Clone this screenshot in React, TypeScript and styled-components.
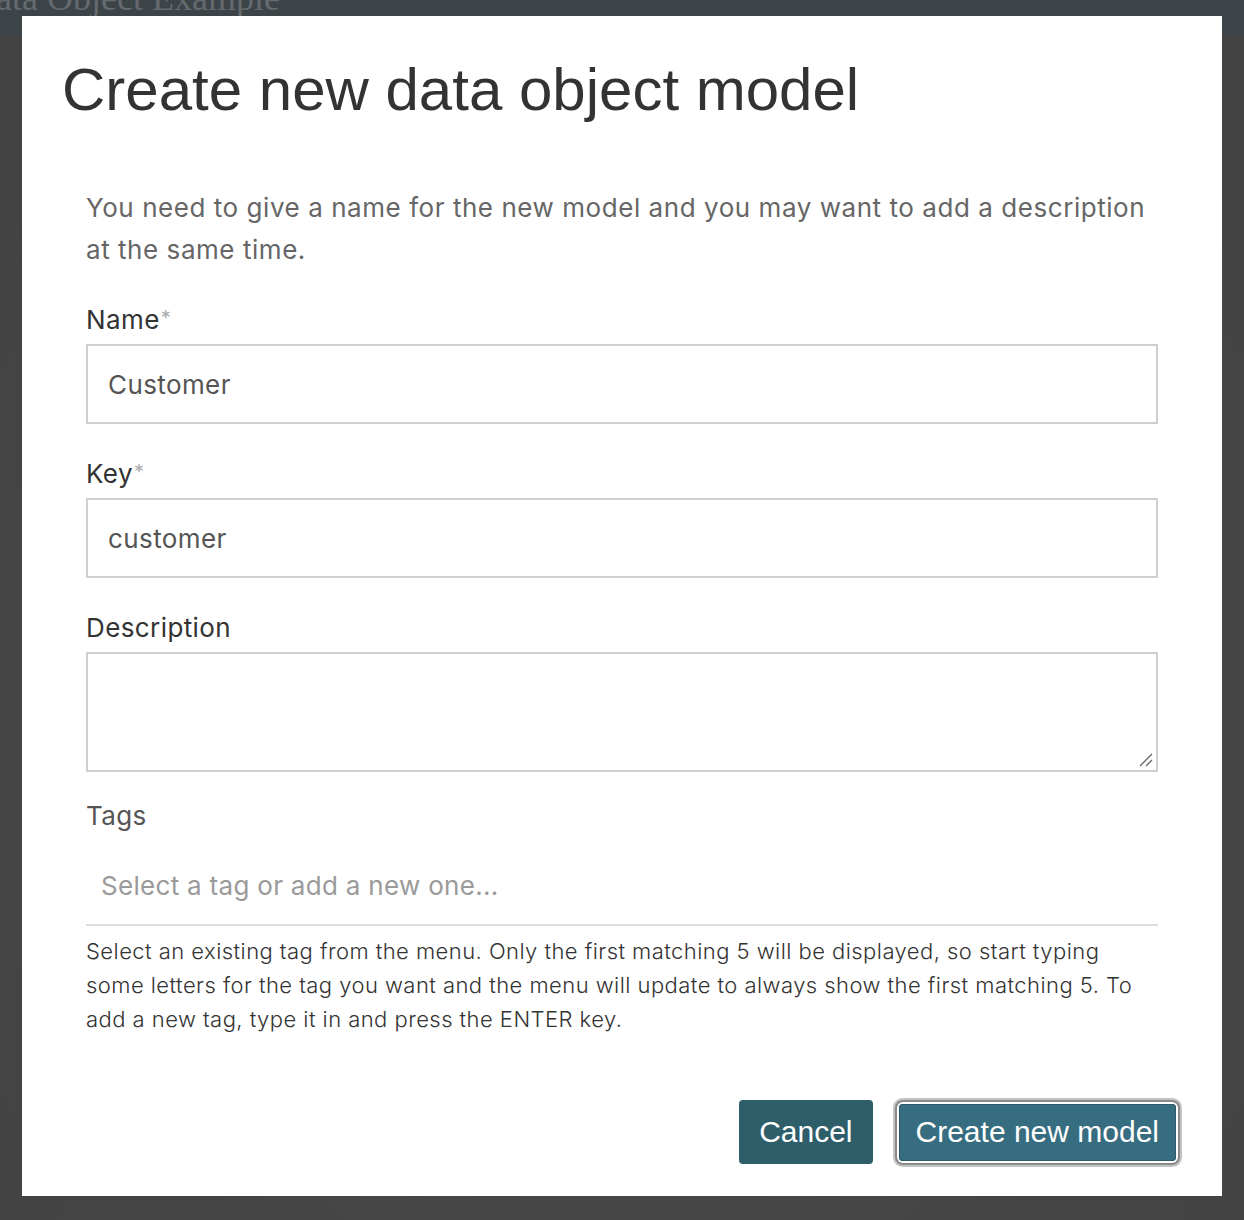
import React from "react";
import styled, { createGlobalStyle } from "styled-components";

const Global = createGlobalStyle`
  html, body { margin: 0; padding: 0; }
  body {
    width: 1244px;
    height: 1220px;
    overflow: hidden;
    background: #464646;
    font-family: "Liberation Sans", Arial, sans-serif;
  }
  #root { height: 1220px; }
`;

const Page = styled.div`
  position: relative;
  width: 1244px;
  height: 1220px;
  background: radial-gradient(ellipse at 50% 60%, #4a4a4a 0%, #424242 100%);
  overflow: hidden;
`;

const TopBar = styled.header`
  height: 36px;
  background: #3d4448;
  overflow: hidden;
`;

const TopTitle = styled.div`
  margin-top: -22px;
  margin-left: -30px;
  font-family: "Liberation Serif", serif;
  font-size: 36px;
  line-height: 40px;
  color: #646a6e;
  white-space: nowrap;
`;

const Modal = styled.div`
  position: absolute;
  left: 22px;
  top: 16px;
  width: 1200px;
  height: 1180px;
  background: #fff;
  box-sizing: border-box;
  display: flex;
  flex-direction: column;
`;

const Title = styled.h1`
  margin: 0;
  padding: 42px 40px 0 40px;
  font-size: 60px;
  line-height: 64px;
  font-weight: 400;
  color: #333;
`;

const Body = styled.div`
  padding: 65px 64px 0 64px;
  display: flex;
  flex-direction: column;
  font-family: Inter, "Liberation Sans", sans-serif;
`;

const Intro = styled.p`
  margin: 0 0 34px 0;
  font-size: 26px;
  line-height: 42px;
  color: #666;
  letter-spacing: 0.55px;
`;

const Field = styled.div<{ $gap?: number }>`
  display: flex;
  flex-direction: column;
  margin-bottom: ${(p) => p.$gap ?? 35}px;
`;

const Label = styled.label<{ $muted?: boolean }>`
  font-size: 26px;
  line-height: 30px;
  color: ${(p) => (p.$muted ? "#555" : "#333")};
  margin-bottom: 9px;
  letter-spacing: 0.4px;
`;

const Req = styled.span`
  color: #aaa;
  font-size: 20px;
  vertical-align: top;
  position: relative;
  top: -2px;
  margin-left: 1px;
`;

const TextInput = styled.div`
  height: 80px;
  box-sizing: border-box;
  border: 2px solid #cfcfcf;
  padding: 0 20px;
  display: flex;
  align-items: center;
  font-size: 26px;
  color: #555;
  letter-spacing: 0.4px;
`;

const TextArea = styled.div`
  position: relative;
  height: 120px;
  box-sizing: border-box;
  border: 2px solid #cfcfcf;
`;

const Grip = styled.svg`
  position: absolute;
  right: 2px;
  bottom: 2px;
`;

const TagInput = styled.div`
  height: 80px;
  box-sizing: border-box;
  border-bottom: 2px solid #dedede;
  padding: 0 0 0 15px;
  display: flex;
  align-items: center;
  font-size: 26px;
  color: #9a9a9a;
  letter-spacing: 0.3px;
  margin-top: 6px;
`;

const Help = styled.p`
  margin: 8px 0 0 0;
  font-size: 22px;
  line-height: 34px;
  color: #333;
  font-weight: 300;
  letter-spacing: 0.45px;
`;

const Footer = styled.div`
  margin-top: auto;
  padding: 0 46px 32px 0;
  display: flex;
  justify-content: flex-end;
  align-items: center;
  gap: 26px;
`;

const Button = styled.button<{ $focused?: boolean }>`
  font-family: "Liberation Sans", Arial, sans-serif;
  font-size: 30px;
  color: #fff;
  border: none;
  border-radius: 4px;
  height: ${(p) => (p.$focused ? "57px" : "64px")};
  padding: ${(p) => (p.$focused ? "0 17px" : "0 20px")};
  background: ${(p) => (p.$focused ? "#376d80" : "#2f5e6b")};
  box-shadow: ${(p) =>
    p.$focused
      ? "0 0 0 2px #fff, 0 0 0 4px #8a8a8a, 0 0 0 6px #c4c4c4, inset 0 0 0 1px #2f5a68"
      : "none"};
  cursor: pointer;
`;

export default function App() {
  return (
    <>
      <Global />
      <Page>
        <TopBar>
          <TopTitle>Data Object Example</TopTitle>
        </TopBar>
        <Modal>
          <Title>Create new data object model</Title>
          <Body>
            <Intro>
              You need to give a name for the new model and you may want to add a description at the same time.
            </Intro>
            <Field>
              <Label>
                Name<Req>*</Req>
              </Label>
              <TextInput>Customer</TextInput>
            </Field>
            <Field>
              <Label>
                Key<Req>*</Req>
              </Label>
              <TextInput>customer</TextInput>
            </Field>
            <Field $gap={29}>
              <Label>Description</Label>
              <TextArea>
                <Grip width="16" height="16" viewBox="0 0 16 16">
                  <line x1="2" y1="14" x2="14" y2="2" stroke="#666" strokeWidth="1.3" />
                  <line x1="8" y1="14" x2="14" y2="8" stroke="#666" strokeWidth="1.3" />
                </Grip>
              </TextArea>
            </Field>
            <Label $muted>Tags</Label>
            <TagInput>Select a tag or add a new one...</TagInput>
            <Help>
              Select an existing tag from the menu. Only the first matching 5 will be displayed, so start typing some letters for the tag you want and the menu will update to always show the first matching 5. To add a new tag, type it in and press the ENTER key.
            </Help>
          </Body>
          <Footer>
            <Button>Cancel</Button>
            <Button $focused>Create new model</Button>
          </Footer>
        </Modal>
      </Page>
    </>
  );
}
